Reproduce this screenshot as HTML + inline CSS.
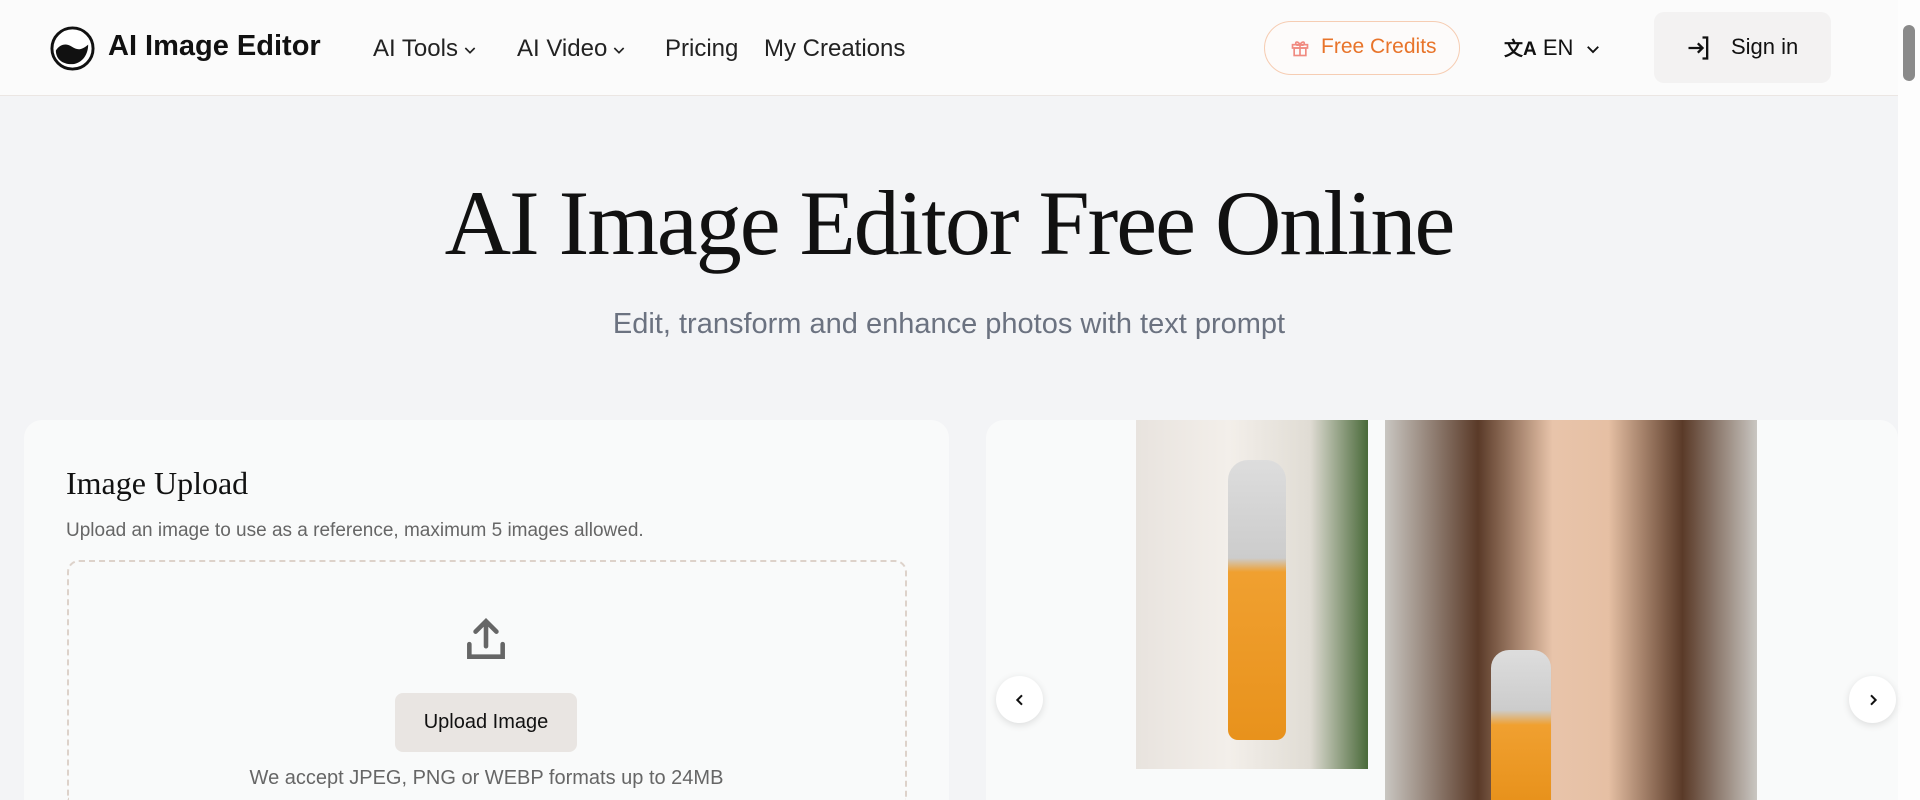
<!DOCTYPE html>
<html style="width:1920px;height:800px;overflow:hidden"><head><meta charset="utf-8"><style>
*{margin:0;padding:0;box-sizing:border-box}
body{width:1920px;height:800px;overflow:hidden;background:#f3f4f6;font-family:"Liberation Sans",sans-serif;color:#111;position:relative}
.hdr{position:absolute;left:0;top:0;width:1898px;height:96px;background:#fbfbfb;border-bottom:1px solid #ebe6e3}
.a{position:absolute;white-space:nowrap}
.nav{font-size:24px;color:#222;top:35px}
.nav svg{vertical-align:middle;margin-left:4px}
.sb{position:absolute;right:0;top:0;width:22px;height:800px;background:#fdfdfd}
.sb .th{position:absolute;left:5px;top:25px;width:12px;height:56px;background:#8a8a8a;border-radius:6px}
.card{position:absolute;top:420px;background:#f9fafa;border-radius:18px 18px 0 0;overflow:hidden}
.ser{font-family:"Liberation Serif",serif}
.arrow{position:absolute;width:47px;height:47px;border-radius:50%;background:#fff;box-shadow:0 2px 8px rgba(0,0,0,.12);display:flex;align-items:center;justify-content:center}
</style></head><body>
<div class="hdr">
  <svg class="a" style="left:49px;top:25px" width="47" height="47" viewBox="0 0 48 48"><circle cx="24" cy="24" r="21" fill="#fff" stroke="#111" stroke-width="3"/><path d="M7 26c4-6 10-8 16-4s10 4 17-2c0 12-8 20-17 20S7 35 7 26z" fill="#111"/></svg>
  <div class="a" style="left:108px;top:30px;font-size:29px;font-weight:bold">AI Image Editor</div>
  <div class="a nav" style="left:373px">AI Tools<svg width="16" height="16" viewBox="0 0 24 24" fill="none" stroke="#222" stroke-width="2.5"><path d="M5 9l7 7 7-7"/></svg></div>
  <div class="a nav" style="left:517px">AI Video<svg width="16" height="16" viewBox="0 0 24 24" fill="none" stroke="#222" stroke-width="2.5"><path d="M5 9l7 7 7-7"/></svg></div>
  <div class="a nav" style="left:665px">Pricing</div>
  <div class="a nav" style="left:764px">My Creations</div>
  <div class="a" style="left:1264px;top:21px;width:196px;height:54px;border:1px solid #f6cdb3;border-radius:27px;background:#fdfbfa"></div>
  <svg class="a" style="left:1290px;top:38px" width="20" height="20" viewBox="0 0 24 24" fill="none" stroke="#f08a80" stroke-width="2"><rect x="3" y="8" width="18" height="4"/><rect x="5" y="12" width="14" height="9"/><path d="M12 8v13M12 8C10 4 6 4 7 7s5 1 5 1M12 8c2-4 6-4 5-1s-5 1-5 1"/></svg>
  <div class="a" style="left:1321px;top:35px;font-size:21px;color:#e8742a">Free Credits</div>
  <div class="a" style="left:1504px;top:34px;font-size:22px"><b style="font-size:19px">文A</b> EN <svg width="18" height="18" viewBox="0 0 24 24" fill="none" stroke="#111" stroke-width="2.5" style="vertical-align:middle;margin-left:4px"><path d="M5 9l7 7 7-7"/></svg></div>
  <div class="a" style="left:1654px;top:12px;width:177px;height:71px;background:#f3f2f2;border-radius:10px"></div>
  <svg class="a" style="left:1685px;top:34px" width="28" height="28" viewBox="0 0 24 24" fill="none" stroke="#111" stroke-width="2"><path d="M15 3h4v18h-4M3 12h12M11 8l4 4-4 4"/></svg>
  <div class="a" style="left:1731px;top:34px;font-size:22px">Sign in</div>
</div>
<div class="sb"><div class="th"></div></div>
<div class="a ser" style="left:0;width:1898px;text-align:center;top:170px;font-size:92px;letter-spacing:-2px">AI Image Editor Free Online</div>
<div class="a" style="left:0;width:1898px;text-align:center;top:308px;font-size:29px;color:#6b7280">Edit, transform and enhance photos with text prompt</div>
<div class="card" style="left:24px;width:925px;height:380px">
  <div class="a ser" style="left:42px;top:45px;font-size:32px">Image Upload</div>
  <div class="a" style="left:42px;top:100px;font-size:19px;color:#666">Upload an image to use as a reference, maximum 5 images allowed.</div>
  <div class="a" style="left:43px;top:140px;width:840px;height:240px;border:2px dashed #ddd2ca;border-bottom:none;border-radius:12px 12px 0 0"></div>
  <svg class="a" style="left:437px;top:195px" width="50" height="50" viewBox="0 0 24 24" fill="none" stroke="#666" stroke-width="2.2" stroke-linecap="round"><path d="M12 15V3M7 8l5-5 5 5M4 14v6h16v-6"/></svg>
  <div class="a" style="left:371px;top:273px;width:182px;height:59px;background:#e9e5e2;border-radius:8px;text-align:center;line-height:59px;font-size:20px">Upload Image</div>
  <div class="a" style="left:0;width:925px;text-align:center;top:347px;font-size:20px;color:#666">We accept JPEG, PNG or WEBP formats up to 24MB</div>
</div>
<div class="card" style="left:986px;width:912px;height:380px">
  <div class="a" style="left:150px;top:0;width:232px;height:349px;background:linear-gradient(90deg,#e8e3de 0%,#f3efea 40%,#e0dcd4 75%,#4a6a3a 100%)"></div>
  <div class="a" style="left:242px;top:40px;width:58px;height:280px;border-radius:20px 20px 10px 10px;background:linear-gradient(180deg,#ddd 0%,#ccc 35%,#f0a030 40%,#e8921c 100%)"></div>
  <div class="a" style="left:399px;top:0;width:372px;height:380px;background:linear-gradient(90deg,#c9c6c1 0%,#5a3a28 25%,#e8c4aa 45%,#e6c0a4 60%,#5a3a28 80%,#c9c6c1 100%)"></div>
  <div class="a" style="left:505px;top:230px;width:60px;height:150px;border-radius:18px 18px 0 0;background:linear-gradient(180deg,#ddd 0%,#ccc 40%,#f0a030 50%,#e8921c 100%)"></div>
</div>
<div class="arrow" style="left:996px;top:676px"><svg width="16" height="16" viewBox="0 0 24 24" fill="none" stroke="#111" stroke-width="3"><path d="M15 5l-7 7 7 7"/></svg></div>
<div class="arrow" style="left:1849px;top:676px"><svg width="16" height="16" viewBox="0 0 24 24" fill="none" stroke="#111" stroke-width="3"><path d="M9 5l7 7-7 7"/></svg></div>
</body></html>
